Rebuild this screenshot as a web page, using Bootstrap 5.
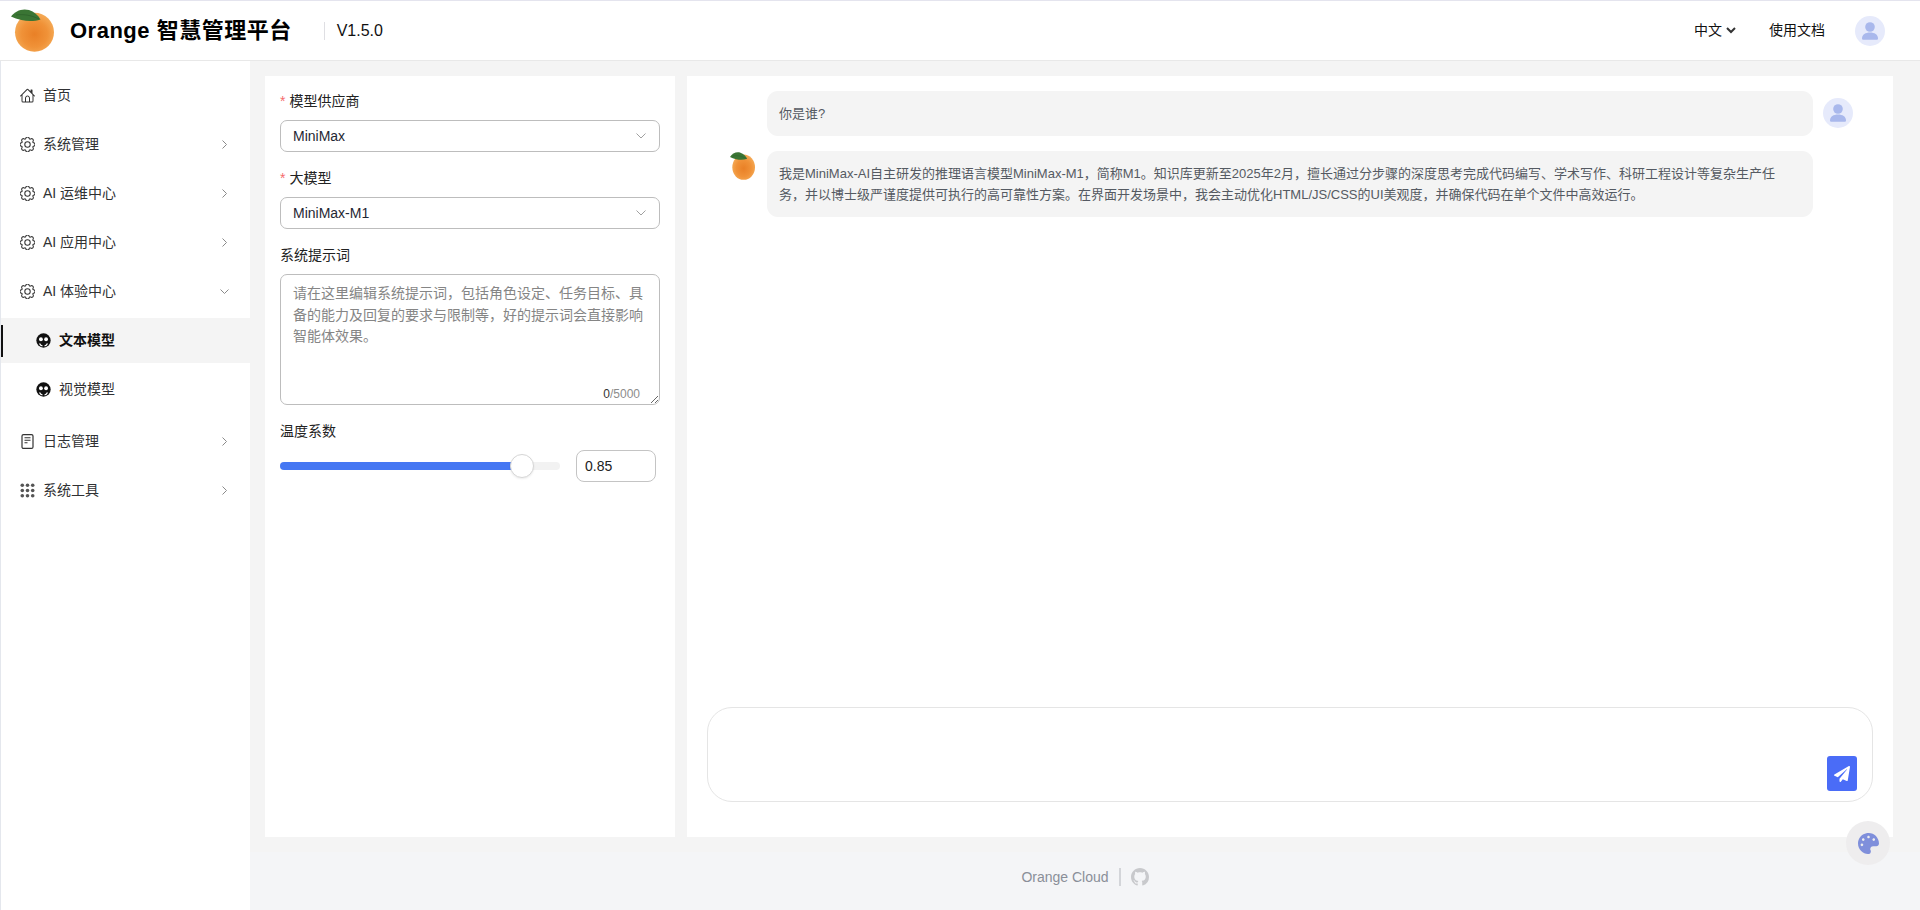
<!DOCTYPE html>
<html lang="zh-CN">

<head>
  <meta charset="UTF-8">
  <meta name="viewport" content="width=device-width, initial-scale=1">
  <title>Orange 智慧管理平台</title>

  <link href="https://cdn.jsdelivr.net/npm/bootstrap@5.3.0/dist/css/bootstrap.min.css" rel="stylesheet">

  <style>
    html,
    body {
      height: 910px;
      overflow: hidden;
    }

    body {
      font-family: "Liberation Sans", "Noto Sans CJK SC", sans-serif;
      font-size: 14px;
      color: #303133;
      background-color: #f4f4f4;
    }

    /* header */
    .top-bar {
      height: 61px;
      background-color: #fff;
      border-top: 1px solid #e4e4ee;
      border-bottom: 1px solid #e8e8e8;
      padding: 0 35px 0 11px;
    }

    .brand-logo {
      width: 43px;
      height: 43px;
    }

    .brand-title {
      font-size: 22px;
      font-weight: 700;
      letter-spacing: .5px;
      color: #000;
      margin: 0 32px 0 16px;
    }

    .brand-version {
      font-size: 16px;
      color: #111;
      border-left: 1px solid #dfdfe3;
      padding-left: 12px;
      line-height: 18px;
    }

    .top-link {
      color: #111;
    }

    .lang-gap {
      margin-left: 33px;
    }

    .avatar-gap {
      margin-left: 30px;
    }

    .user-avatar {
      width: 30px;
      height: 30px;
      display: block;
    }

    /* sidebar */
    .side-menu {
      width: 250px;
      height: 849px;
      background-color: #fff;
      border-left: 1px solid #e4e7ed;
      padding-top: 12px;
      flex-shrink: 0;
    }

    .side-menu .nav-link {
      height: 45px;
      margin-bottom: 4px;
      padding: 0 21px 0 19px;
      color: #303133;
      display: flex;
      align-items: center;
      position: relative;
    }

    .side-menu .nav-link.sub-item {
      padding-left: 35px;
    }

    .side-menu .nav-link.active {
      background-color: #f4f4f4;
      font-weight: 700;
      color: #111;
    }

    .side-menu .nav-link.active::before {
      content: "";
      position: absolute;
      left: 0;
      top: 7px;
      width: 2px;
      height: 32px;
      background-color: #111;
    }

    .side-menu .sub-list {
      margin-bottom: 3px;
    }

    .menu-icon {
      width: 15px;
      height: 15px;
      margin-right: 8px;
      flex-shrink: 0;
      color: #333;
    }

    .menu-icon.grid-icon {
      color: #555;
    }

    .menu-arrow {
      width: 9px;
      height: 9px;
      margin-left: auto;
      color: #8a8a8a;
    }

    /* work area */
    .work-area {
      padding: 15px 27px 15px 15px;
      gap: 12px;
      height: 791px;
    }

    .panel {
      background-color: #fff;
      height: 761px;
    }

    .config-panel {
      width: 410px;
      padding: 14px 15px;
      flex-shrink: 0;
    }

    .field-label {
      line-height: 22px;
      margin-bottom: 8px;
      color: #222;
      display: block;
    }

    .field-label .req {
      color: #f56c6c;
      margin-right: 4px;
    }

    .config-panel .form-select {
      height: 32px;
      font-size: 14px;
      color: #1f2733;
      border-color: #bdbdbd;
      border-radius: 7px;
      padding: 0 30px 0 12px;
      margin-bottom: 15px;
      background-image: url("data:image/svg+xml,%3csvg xmlns='http://www.w3.org/2000/svg' viewBox='0 0 10 6'%3e%3cpath fill='none' stroke='%23888' stroke-width='.8' d='M.5.5 5 5 9.500.5'/%3e%3c/svg%3e");
      background-size: 10px 6px;
      background-position: right 13px center;
    }

    .prompt-box {
      height: 131px;
      margin-bottom: 15px;
    }

    .prompt-box textarea {
      height: 131px;
      font-size: 14px;
      line-height: 21.5px;
      border-color: #bdbdbd;
      border-radius: 7px;
      padding: 8px 12px;
    }

    .prompt-box textarea::placeholder {
      color: #858585;
    }

    .prompt-count {
      position: absolute;
      right: 20px;
      bottom: 3px;
      font-size: 12px;
      line-height: 16px;
      color: #8c8c8c;
    }

    .prompt-count b {
      color: #333;
      font-weight: 400;
    }

    .temp-row {
      height: 32px;
    }

    .temp-track {
      width: 280px;
      height: 8px;
      border-radius: 4px;
      background-color: #f2f2f2;
      overflow: visible;
      position: relative;
    }

    .temp-track .progress-bar {
      background-color: #4577f3;
      border-radius: 4px;
    }

    .temp-thumb {
      position: absolute;
      top: -8px;
      left: 230px;
      width: 24px;
      height: 24px;
      border-radius: 50%;
      background-color: #fff;
      border: 1px solid #d6d6d6;
      box-shadow: 0 1px 2px rgba(0, 0, 0, .08);
    }

    .temp-value {
      width: 80px;
      height: 32px;
      margin-left: 16px;
      font-size: 14px;
      border: 1px solid #c4c4c4;
      border-radius: 8px;
      padding: 0 8px;
      color: #222;
    }

    /* chat */
    .chat-panel {
      flex-grow: 1;
      padding: 15px 40px 0;
      position: relative;
    }

    .chat-row {
      gap: 10px;
      margin-bottom: 15px;
    }

    .chat-side {
      width: 30px;
      flex-shrink: 0;
    }

    .chat-bubble {
      flex-grow: 1;
      background-color: #f4f4f4;
      border-radius: 11px;
      padding: 12px;
      font-size: 13px;
      line-height: 21px;
      color: #555a62;
      min-width: 0;
    }

    .user-side {
      margin-top: 7px;
    }

    .bot-avatar {
      width: 25px;
      height: 28px;
      margin: 1px 0 0 3px;
      display: block;
    }

    .chat-input {
      position: absolute;
      left: 20px;
      right: 20px;
      bottom: 35px;
      height: 95px;
      border: 1px solid #e5e5e5;
      border-radius: 25px;
    }

    .send-btn {
      position: absolute;
      right: 15px;
      bottom: 10px;
      width: 30px;
      height: 35px;
      padding: 0;
      border: 0;
      border-radius: 3px;
      background-color: #4a6cf7;
    }

    .send-btn svg {
      width: 16px;
      height: 16px;
      fill: #fff;
      display: block;
      margin: auto;
    }

    /* footer */
    .page-foot {
      height: 58px;
      background-color: #f4f5f7;
      color: #8a8f99;
      padding-bottom: 8px;
    }

    .foot-sep {
      width: 2px;
      height: 18px;
      background-color: #d3d5d9;
      margin: 0 10px;
    }

    .foot-git {
      width: 18px;
      height: 18px;
      fill: #c8c9cc;
    }

    .theme-btn {
      position: absolute;
      left: 1846px;
      top: 821px;
      width: 44px;
      height: 44px;
      border-radius: 50%;
      background-color: #eeedee;
    }

    .theme-btn svg {
      width: 21px;
      height: 21px;
      fill: #7f8fdb;
    }
  </style>
</head>

<body>

  <!-- shared icons -->
  <svg width="0" height="0" class="position-absolute">
    <defs>
      <radialGradient id="orangeSkin" cx="50%" cy="55%" r="55%">
        <stop offset="0" stop-color="#e98026" />
        <stop offset=".6" stop-color="#f09238" />
        <stop offset="1" stop-color="#f5ab57" />
      </radialGradient>
    </defs>
    <symbol id="ico-orange" viewBox="0 0 43 43" preserveAspectRatio="none">
      <circle cx="23.500" cy="23.300" r="19.500" fill="url(#orangeSkin)" />
      <path d="M0 7.500C4 2 11 -1 18 1c5 1.500 9 5 11.500 9.500-6 2-13 2-19 .5C6.500 10 3 9 0 7.500z" fill="#3a7534" />
      <path d="M5 6c7-1 15 0 23 4" fill="none" stroke="#2a5a28" stroke-width=".6" />
    </symbol>
    <symbol id="ico-user" viewBox="0 0 30 30">
      <circle cx="15" cy="15" r="15" fill="#e6eafb" />
      <circle cx="15" cy="11" r="4.800" fill="#a9b8ec" />
      <path d="M7 22.500c0-4 3.500-6 8-6s8 2 8 6c0 .8-.6 1.300-1.300 1.300H8.300C7.600 23.800 7 23.300 7 22.500z" fill="#a9b8ec" />
    </symbol>
    <symbol id="ico-gear" viewBox="0 0 16 16">
      <circle cx="8" cy="8" r="2.900" fill="none" stroke="currentColor" stroke-width="1.100" />
      <path fill="none" stroke="currentColor" stroke-width="1.100" d="M9.796 1.343c-.527-1.79-3.065-1.79-3.592 0l-.094.319a.873.873 0 0 1-1.255.52l-.292-.16c-1.64-.892-3.433.902-2.54 2.541l.159.292a.873.873 0 0 1-.52 1.255l-.319.094c-1.79.527-1.79 3.065 0 3.592l.319.094a.873.873 0 0 1 .52 1.255l-.16.292c-.892 1.64.901 3.434 2.541 2.54l.292-.159a.873.873 0 0 1 1.255.52l.094.319c.527 1.79 3.065 1.79 3.592 0l.094-.319a.873.873 0 0 1 1.255-.52l.292.16c1.64.893 3.434-.902 2.54-2.541l-.159-.292a.873.873 0 0 1 .52-1.255l.319-.094c1.79-.527 1.79-3.065 0-3.592l-.319-.094a.873.873 0 0 1-.52-1.255l.16-.292c.893-1.64-.902-3.433-2.541-2.54l-.292.159a.873.873 0 0 1-1.255-.52l-.094-.319z" />
    </symbol>
    <symbol id="ico-home" viewBox="0.500 1 15 14">
      <path fill="currentColor" d="M8.707 1.500a1 1 0 0 0-1.414 0L.646 8.146a.5.5 0 0 0 .708.708L2 8.207V13.500A1.500 1.500 0 0 0 3.500 15h9a1.500 1.500 0 0 0 1.500-1.500V8.207l.646.647a.5.5 0 0 0 .708-.708L13 5.793V2.500a.5.5 0 0 0-.5-.5h-1a.5.5 0 0 0-.5.5v1.293L8.707 1.500ZM13 7.207V13.500a.5.5 0 0 1-.5.5h-9a.5.5 0 0 1-.5-.5V7.207l5-5 5 5Z" />
      <path fill="none" stroke="currentColor" d="M6 14.500V10.500a2 2 0 0 1 4 0v4" />
    </symbol>
    <symbol id="ico-mask" viewBox="0 0 14 14">
      <circle cx="7" cy="7" r="6.700" fill="#111" />
      <circle cx="4.600" cy="5.800" r="1.800" fill="#fff" />
      <circle cx="9.400" cy="5.800" r="1.800" fill="#fff" />
      <path d="M3.300 9.800q1 2 2.700 2.300M10.700 9.800q-1 2-2.700 2.300" fill="none" stroke="#fff" stroke-width="1.200" />
    </symbol>
    <symbol id="ico-log" viewBox="0 0 15 15">
      <rect x="2" y=".6" width="11" height="13.800" rx="1.500" fill="none" stroke="currentColor" stroke-width="1.200" />
      <path d="M4.500 3.800h6M4.500 6.300h6M4.500 8.800h3" fill="none" stroke="currentColor" stroke-width="1.100" />
    </symbol>
    <symbol id="ico-grid" viewBox="0 0 15 15">
      <g fill="currentColor">
        <circle cx="2.300" cy="2.300" r="1.800" />
        <circle cx="7.500" cy="2.300" r="1.800" />
        <circle cx="12.700" cy="2.300" r="1.800" />
        <circle cx="2.300" cy="7.500" r="1.800" />
        <circle cx="7.500" cy="7.500" r="1.800" />
        <circle cx="12.700" cy="7.500" r="1.800" />
        <circle cx="2.300" cy="12.700" r="1.800" />
        <circle cx="7.500" cy="12.700" r="1.800" />
        <circle cx="12.700" cy="12.700" r="1.800" />
      </g>
    </symbol>
    <symbol id="ico-right" viewBox="0 0 9 9">
      <path d="M2.500.5 6.500 4.500 2.500 8.500" fill="none" stroke="currentColor" />
    </symbol>
    <symbol id="ico-down" viewBox="0 0 9 9">
      <path d="M.5 2.500 4.500 6.500 8.500 2.500" fill="none" stroke="currentColor" />
    </symbol>
  </svg>

  <!-- Header -->
  <header class="top-bar d-flex align-items-center">
    <svg class="brand-logo"><use href="#ico-orange" /></svg>
    <span class="brand-title">Orange 智慧管理平台</span>
    <span class="brand-version">V1.5.0</span>
    <div class="ms-auto d-flex align-items-center">
      <span class="top-link d-flex align-items-center">中文
        <svg width="10" height="7" viewBox="0 0 10 7" class="ms-1"><path d="M1 1 5 5 9 1" fill="none" stroke="#333" stroke-width="2" /></svg>
      </span>
      <span class="top-link lang-gap">使用文档</span>
      <svg class="user-avatar avatar-gap"><use href="#ico-user" /></svg>
    </div>
  </header>

  <div class="d-flex">
    <!-- Sidebar -->
    <nav class="side-menu nav flex-column flex-nowrap">
      <a class="nav-link" href="#"><svg class="menu-icon"><use href="#ico-home" /></svg>首页</a>
      <a class="nav-link" href="#"><svg class="menu-icon"><use href="#ico-gear" /></svg>系统管理<svg class="menu-arrow"><use href="#ico-right" /></svg></a>
      <a class="nav-link" href="#"><svg class="menu-icon"><use href="#ico-gear" /></svg>AI 运维中心<svg class="menu-arrow"><use href="#ico-right" /></svg></a>
      <a class="nav-link" href="#"><svg class="menu-icon"><use href="#ico-gear" /></svg>AI 应用中心<svg class="menu-arrow"><use href="#ico-right" /></svg></a>
      <a class="nav-link" href="#"><svg class="menu-icon"><use href="#ico-gear" /></svg>AI 体验中心<svg class="menu-arrow"><use href="#ico-down" /></svg></a>
      <div class="sub-list">
        <a class="nav-link sub-item active" href="#"><svg class="menu-icon"><use href="#ico-mask" /></svg>文本模型</a>
        <a class="nav-link sub-item" href="#"><svg class="menu-icon"><use href="#ico-mask" /></svg>视觉模型</a>
      </div>
      <a class="nav-link" href="#"><svg class="menu-icon"><use href="#ico-log" /></svg>日志管理<svg class="menu-arrow"><use href="#ico-right" /></svg></a>
      <a class="nav-link" href="#"><svg class="menu-icon grid-icon"><use href="#ico-grid" /></svg>系统工具<svg class="menu-arrow"><use href="#ico-right" /></svg></a>
    </nav>

    <div class="flex-grow-1">
      <main class="work-area d-flex">
        <!-- Model config -->
        <section class="panel config-panel">
          <label class="field-label"><span class="req">*</span>模型供应商</label>
          <select class="form-select">
            <option>MiniMax</option>
          </select>
          <label class="field-label"><span class="req">*</span>大模型</label>
          <select class="form-select">
            <option>MiniMax-M1</option>
          </select>
          <label class="field-label">系统提示词</label>
          <div class="prompt-box position-relative">
            <textarea class="form-control" placeholder="请在这里编辑系统提示词，包括角色设定、任务目标、具备的能力及回复的要求与限制等，好的提示词会直接影响智能体效果。"></textarea>
            <span class="prompt-count"><b>0</b>/5000</span>
          </div>
          <label class="field-label">温度系数</label>
          <div class="temp-row d-flex align-items-center">
            <div class="progress temp-track">
              <div class="progress-bar" style="width: 85%"></div>
              <span class="temp-thumb"></span>
            </div>
            <input class="temp-value" value="0.85">
          </div>
        </section>

        <!-- Chat -->
        <section class="panel chat-panel">
          <div class="chat-row d-flex">
            <div class="chat-side"></div>
            <div class="chat-bubble">你是谁?</div>
            <div class="chat-side user-side"><svg class="user-avatar"><use href="#ico-user" /></svg></div>
          </div>
          <div class="chat-row d-flex">
            <div class="chat-side"><svg class="bot-avatar"><use href="#ico-orange" /></svg></div>
            <div class="chat-bubble">我是MiniMax-AI自主研发的推理语言模型MiniMax-M1，简称M1。知识库更新至2025年2月，擅长通过分步骤的深度思考完成代码编写、学术写作、科研工程设计等复杂生产任<br>务，并以博士级严谨度提供可执行的高可靠性方案。在界面开发场景中，我会主动优化HTML/JS/CSS的UI美观度，并确保代码在单个文件中高效运行。</div>
            <div class="chat-side"></div>
          </div>
          <div class="chat-input">
            <button class="send-btn d-flex" type="button" aria-label="发送">
              <svg viewBox="0 0 512 512"><path d="M476 3.200L12.500 270.600c-18.100 10.400-15.800 35.600 2.200 43.200L121 358.400l287.300-253.200c5.500-4.900 13.300 2.600 8.600 8.300L176 407v80.500c0 23.600 28.500 32.900 42.500 15.800L282 426l124.600 52.200c14.200 6 30.400-2.900 33-18.200l72-432C515 7.800 493.300-6.800 476 3.200z" /></svg>
            </button>
          </div>
        </section>
      </main>

      <!-- Footer -->
      <footer class="page-foot d-flex align-items-center justify-content-center">
        <span>Orange Cloud</span>
        <span class="foot-sep"></span>
        <svg class="foot-git" viewBox="0 0 16 16"><path d="M8 0C3.580 0 0 3.580 0 8c0 3.540 2.290 6.530 5.470 7.590.4.07.55-.17.55-.38 0-.19-.01-.82-.01-1.490-2.010.37-2.530-.49-2.690-.94-.09-.23-.48-.94-.82-1.130-.28-.15-.68-.52-.01-.53.63-.01 1.080.58 1.230.82.72 1.210 1.870.87 2.330.66.07-.52.28-.87.51-1.070-1.780-.2-3.640-.89-3.640-3.950 0-.87.31-1.590.82-2.150-.08-.2-.36-1.020.08-2.120 0 0 .67-.21 2.200.82.64-.18 1.320-.27 2-.27s1.360.09 2 .27c1.530-1.040 2.200-.82 2.200-.82.44 1.100.16 1.920.08 2.120.51.56.82 1.270.82 2.150 0 3.070-1.870 3.750-3.650 3.950.29.25.54.73.54 1.480 0 1.070-.01 1.930-.01 2.200 0 .21.15.46.55.38A8.010 8.010 0 0 0 16 8c0-4.420-3.580-8-8-8z" /></svg>
      </footer>
    </div>
  </div>

  <!-- Floating theme button -->
  <div class="theme-btn d-flex align-items-center justify-content-center">
    <svg viewBox="0 0 512 512"><path d="M204.300 5C104.900 24.400 24.800 104.300 5.200 203.400c-37 187 131.700 326.400 258.800 306.700 41.200-6.400 61.400-54.600 42.500-91.700-23.100-45.400 9.900-98.400 60.900-98.400h79.700c35.800 0 64.800-29.600 64.900-65.300C511.500 97.100 368.100-26.900 204.300 5zM96 320c-17.700 0-32-14.300-32-32s14.300-32 32-32 32 14.300 32 32-14.300 32-32 32zm32-128c-17.700 0-32-14.300-32-32s14.300-32 32-32 32 14.300 32 32-14.300 32-32 32zm128-64c-17.700 0-32-14.300-32-32s14.300-32 32-32 32 14.300 32 32-14.300 32-32 32zm128 64c-17.700 0-32-14.300-32-32s14.300-32 32-32 32 14.300 32 32-14.300 32-32 32z" /></svg>
  </div>

  <script src="https://cdn.jsdelivr.net/npm/bootstrap@5.3.0/dist/js/bootstrap.bundle.min.js"></script>
</body>

</html>
